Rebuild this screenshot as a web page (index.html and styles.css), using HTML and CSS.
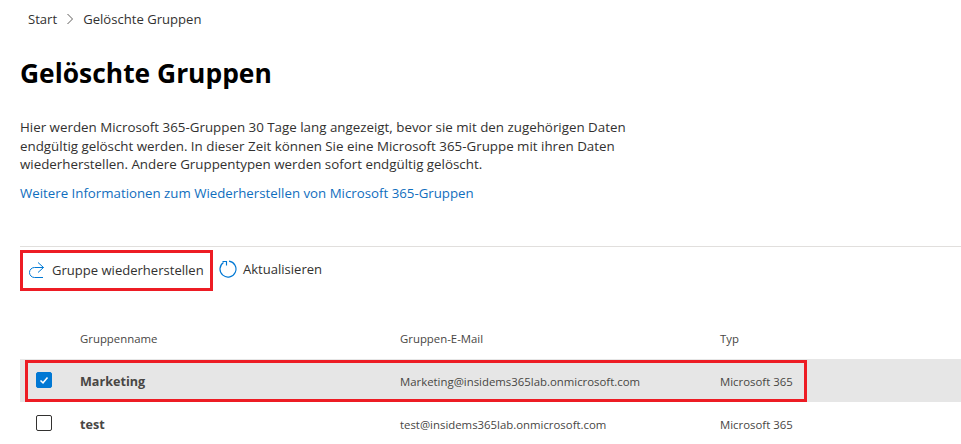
FILE: index.html
```html
<!DOCTYPE html>
<html lang="de">
<head>
    <meta charset="UTF-8">
    <title>Gelöschte Gruppen</title>
    <link rel="stylesheet" href="styles.css">
</head>
<body>
    <nav class="breadcrumb">
        <span>Start</span>
        <svg class="crumb-sep" width="8" height="12" viewBox="0 0 8 12"><path d="M1.500 1 6.500 6l-5 5" fill="none" stroke="#605e5c"/></svg>
        <span>Gelöschte Gruppen</span>
    </nav>

    <h1 class="page-title">Gelöschte Gruppen</h1>

    <p class="intro">Hier werden Microsoft 365-Gruppen 30 Tage lang angezeigt, bevor sie mit den zugehörigen Daten<br>endgültig gelöscht werden. In dieser Zeit können Sie eine Microsoft 365-Gruppe mit ihren Daten<br>wiederherstellen. Andere Gruppentypen werden sofort endgültig gelöscht.</p>
    <a class="more-link" href="#">Weitere Informationen zum Wiederherstellen von Microsoft 365-Gruppen</a>

    <div class="toolbar">
        <button class="tool-btn restore-btn">
            <svg width="16" height="16" viewBox="0 0 16 16"><path d="M14.500 5.500H5.500a5 5 0 0 0 0 10H14M9 0.500l5.500 5-5.500 5" fill="none" stroke="#0078d4"/></svg>
            Gruppe wiederherstellen
        </button>
        <button class="tool-btn">
            <svg width="18" height="18" viewBox="0 0 18 18"><path d="M10 1.100A8 8 0 1 1 4.500 2.400M3.500 1.500H7.500V5.500" fill="none" stroke="#0078d4" stroke-width="1.150"/></svg>
            Aktualisieren
        </button>
    </div>

    <div class="group-table">
        <div class="row head-row">
            <span class="cell-check"></span>
            <span class="cell-name">Gruppenname</span>
            <span class="cell-mail">Gruppen-E-Mail</span>
            <span class="cell-type">Typ</span>
        </div>
        <div class="row selected">
            <span class="cell-check"><span class="checkbox checked"><svg width="12" height="12" viewBox="0 0 12 12"><path d="M2.500 6.500 5 8.800 9.500 3.500" fill="none" stroke="#fff" stroke-width="1.500"/></svg></span></span>
            <span class="cell-name strong">Marketing</span>
            <span class="cell-mail">Marketing@insidems365lab.onmicrosoft.com</span>
            <span class="cell-type">Microsoft 365</span>
        </div>
        <div class="row">
            <span class="cell-check"><span class="checkbox"></span></span>
            <span class="cell-name strong">test</span>
            <span class="cell-mail">test@insidems365lab.onmicrosoft.com</span>
            <span class="cell-type">Microsoft 365</span>
        </div>
        <div class="mark mark-row"></div>
    </div>
</body>
</html>
```
FILE: styles.css
```css
* { margin: 0; padding: 0; box-sizing: border-box; }
html, body { height: 444px; overflow: hidden; }
body { font-family: "Open Sans", "Noto Sans", sans-serif; background: #fff; color: #323130; font-size: 13px; padding-left: 20px; }
.breadcrumb { display: flex; align-items: center; height: 20px; margin-top: 9px; padding-left: 8px; gap: 9px; font-size: 13.100px; color: #323130; }
.page-title { font-size: 26.400px; font-weight: 700; line-height: 36px; margin-top: 26px; color: #000; }
.intro { margin-top: 27px; font-size: 13.350px; line-height: 18.500px; width: 660px; color: #323130; }
.more-link { display: block; margin-top: 9px; line-height: 20px; font-size: 13.280px; color: #106ebe; text-decoration: none; }
.toolbar { display: flex; align-items: center; margin-top: 43px; height: 46px; border-top: 1px solid #e1dfdd; }
.tool-btn { display: flex; align-items: center; background: none; border: 0; font: inherit; font-size: 13.050px; color: #323130; height: 40px; }
.tool-btn svg { margin-right: 6px; }
.restore-btn { width: 193px; height: 41px; margin-right: 6px; margin-top: 2px; border: 3px solid #ed1c24; padding-left: 6px; }
.restore-btn svg { margin-right: 7px; }
.group-table { position: relative; margin-top: 27px; }
.row { display: flex; align-items: center; height: 43px; font-size: 11.380px; color: #484644; }
.row span { padding-top: 2px; }
.row .cell-check, .row .checkbox { padding-top: 0; }
.head-row { height: 40px; }
.head-row span { padding-top: 0; }
.selected { background: #e6e6e6; }
.cell-check { width: 60px; padding-left: 16px; display: flex; }
.cell-name, .cell-mail { width: 320px; }
.strong { font-size: 12.600px; font-weight: 700; }
.checkbox { display: flex; align-items: center; justify-content: center; width: 16px; height: 16px; border: 1px solid #323130; border-radius: 2px; }
.checkbox.checked { background: #0078d4; border-color: #0078d4; }
.mark { position: absolute; border: 3px solid #ed1c24; }
.mark-row { left: 5px; top: 41px; width: 782px; height: 42px; }
```
